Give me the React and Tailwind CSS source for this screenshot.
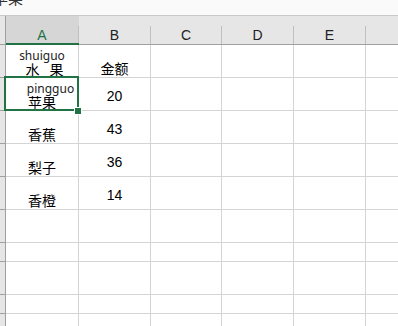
import React from "react";

const cols = [
  { l: "A", w: "w-[73px]" },
  { l: "B", w: "w-[72px]" },
  { l: "C", w: "w-[71px]" },
  { l: "D", w: "w-[72px]" },
  { l: "E", w: "w-[72px]" },
];

const rowHeights = ["h-[33px]", "h-[33px]", "h-[33px]", "h-[33px]", "h-[33px]", "h-[33px]", "h-[19px]", "h-[33px]", "h-[19px]", "h-[33px]"];

const font = { fontFamily: '"Noto Sans", "Noto Sans CJK SC", sans-serif' };

function CellA({ r }) {
  if (r === 0)
    return (
      <div className="flex h-full flex-col items-center justify-end">
        <span className="text-[12px] leading-[12px] text-[#222]">shuiguo</span>
        <span className="ml-[5px] flex gap-[10px] text-[14px] leading-[15px] text-black">
          <span>水</span>
          <span>果</span>
        </span>
      </div>
    );
  if (r === 1)
    return (
      <div className="relative flex h-full flex-col items-center justify-end">
        <span className="ml-[17px] text-[12px] leading-[12px] text-[#222]">pingguo</span>
        <span className="text-[14px] leading-[15px] text-black">苹果</span>
        <div className="pointer-events-none absolute -left-[2px] -top-[2px] h-[35px] w-[75px] border-2 border-[#217346]" />
        <div className="absolute -right-[3px] -bottom-[4px] h-[6px] w-[6px] bg-[#217346] outline outline-1 outline-white" />
      </div>
    );
  const t = ["", "", "香蕉", "梨子", "香橙"][r];
  if (!t) return null;
  return (
    <div className="flex h-full items-end justify-center pb-[1px]">
      <span className="text-[14px] leading-[15px] text-black">{t}</span>
    </div>
  );
}

function CellB({ r }) {
  if (r === 0)
    return (
      <div className="flex h-full items-end justify-center pb-[1px]">
        <span className="text-[14px] leading-[15px] text-black">金额</span>
      </div>
    );
  const t = ["", "20", "43", "36", "14"][r];
  if (!t) return null;
  return (
    <div className="flex h-full items-start justify-center pt-[10px]">
      <span className="text-[14px] leading-[16px] text-black" style={{ fontFamily: '"Liberation Sans", sans-serif' }}>{t}</span>
    </div>
  );
}

export default function App() {
  return (
    <div className="h-[326px] w-[398px] overflow-hidden bg-white" style={font}>
      <div className="h-[16px] overflow-hidden border-b border-[#c8c8c8] bg-[#fafafa]">
        <div className="-mt-[11px] -ml-[7px] text-[15px] leading-[18px] text-[#333]">苹果</div>
      </div>
      <div className="flex h-[29px] bg-[#e6e6e6]">
        <div className="h-full w-[6px] shrink-0 border-b border-r border-[#a0a0a0] bg-[#e6e6e6]" />
        {cols.map((c, i) => (
          <div
            key={c.l}
            className={`${c.w} flex h-full shrink-0 flex-col ${i === 0 ? "border-b-2 border-[#217346] bg-[#d6d6d6]" : "border-b border-[#a0a0a0]"}`}
          >
            <div className="h-[10px]" />
            <div
              className={`flex flex-1 items-center justify-center border-r border-[#c0c0c0] text-[14px] leading-none ${i === 0 ? "text-[#217346]" : "text-[#222]"}`}
              style={{ fontFamily: '"Liberation Sans", sans-serif' }}
            >
              {c.l}
            </div>
          </div>
        ))}
        <div className="flex-1 border-b border-[#a0a0a0]" />
      </div>
      {rowHeights.map((h, r) => (
        <div key={r} className={`flex ${h}`}>
          <div className="h-full w-[6px] shrink-0 border-b border-r border-[#a0a0a0] bg-[#e6e6e6]" />
          {cols.map((c, i) => (
            <div key={c.l} className={`${c.w} h-full shrink-0 border-b border-r border-[#d4d4d4] ${i === 0 && r === 1 ? "relative z-10" : ""}`}>
              {i === 0 ? <CellA r={r} /> : i === 1 ? <CellB r={r} /> : null}
            </div>
          ))}
          <div className="h-full flex-1 border-b border-[#d4d4d4]" />
        </div>
      ))}
    </div>
  );
}
